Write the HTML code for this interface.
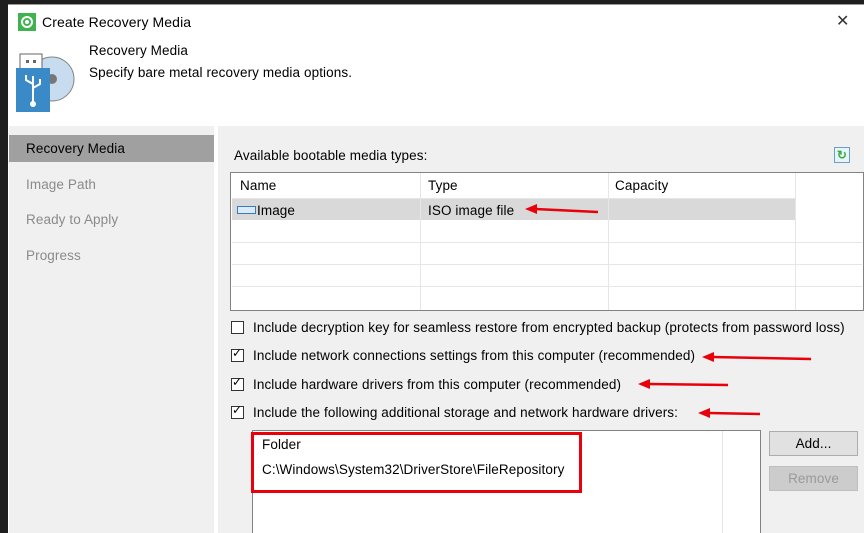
<!DOCTYPE html>
<html><head><style>
*{margin:0;padding:0;box-sizing:border-box}
html,body{width:864px;height:533px;overflow:hidden}
body{background:#1e1e1e;font-family:"Liberation Sans",sans-serif;font-size:13.5px;color:#000;position:relative;letter-spacing:0.1px}
.a{position:absolute;white-space:nowrap}
.cb{position:absolute;width:13px;height:13px;border:1px solid #333;background:#fff}
.row{position:absolute;left:232px;width:563px;height:1px;background:#e6e6e6}
.btn{position:absolute;width:89px;height:25px;border:1px solid #adadad;background:#e1e1e1;text-align:center;line-height:23px}
</style></head><body>
<div class="a" style="left:8px;top:4px;width:856px;height:529px;background:#fff;border-top:1px solid #999"></div>
<div class="a" style="left:9px;top:126px;width:855px;height:407px;background:#f0f0f0"></div>
<div class="a" style="left:214px;top:126px;width:4px;height:407px;background:#fff"></div>
<div class="a" style="left:18px;top:13px;width:18px;height:18px;background:#3fb34f"></div>
<div class="a" style="left:21px;top:16px;width:12px;height:12px;border:2.5px solid #fff;border-radius:50%"></div>
<div class="a" style="left:25px;top:20px;width:4px;height:4px;background:#fff;border-radius:50%"></div>
<div class="a" style="left:42px;top:14px;font-size:14px">Create Recovery Media</div>
<div class="a" style="left:836px;top:11px;font-size:16px;color:#333">✕</div>
<svg class="a" style="left:14px;top:50px" width="64" height="64" viewBox="0 0 64 64">
<circle cx="38" cy="29" r="22" fill="#c7dcef" stroke="#888" stroke-width="1"/>
<circle cx="38" cy="29" r="5" fill="#777"/>
<rect x="6" y="4" width="22" height="17" fill="#fff" stroke="#666"/>
<rect x="12" y="10" width="3" height="3" fill="#666"/><rect x="19" y="10" width="3" height="3" fill="#666"/>
<rect x="2" y="18" width="34" height="44" fill="#3a8ac8"/>
<path d="M19 26v26M19 34l-7-4v-5M19 38l7-4v-5" stroke="#fff" stroke-width="2" fill="none"/>
<circle cx="19" cy="54" r="3" fill="#fff"/>
</svg>
<div class="a" style="left:89px;top:43px">Recovery Media</div>
<div class="a" style="left:89px;top:65px">Specify bare metal recovery media options.</div>
<div class="a" style="left:9px;top:135px;width:205px;height:27px;background:#a0a0a0"></div>
<div class="a" style="left:26px;top:141px">Recovery Media</div>
<div class="a" style="left:26px;top:177px;color:#8a8a8a">Image Path</div>
<div class="a" style="left:26px;top:212px;color:#8a8a8a">Ready to Apply</div>
<div class="a" style="left:26px;top:248px;color:#8a8a8a">Progress</div>
<div class="a" style="left:234px;top:148px">Available bootable media types:</div>
<div class="a" style="left:834px;top:147px;width:16px;height:16px;border:1px solid #6a9fc9;background:#e8f4fb;color:#3bab3b;font-size:12px;line-height:14px;text-align:center;font-weight:bold">↻</div>
<div class="a" style="left:230px;top:172px;width:634px;height:139px;border:1px solid #828282;background:#fff"></div>
<div class="a" style="left:232px;top:199px;width:563px;height:21px;background:#d9d9d9"></div>
<div class="a" style="left:420px;top:173px;width:1px;height:137px;background:#e6e6e6"></div>
<div class="a" style="left:608px;top:173px;width:1px;height:137px;background:#e6e6e6"></div>
<div class="a" style="left:795px;top:173px;width:1px;height:137px;background:#e6e6e6"></div>
<div class="row" style="top:198px"></div><div class="row" style="top:242px;width:630px"></div><div class="row" style="top:264px;width:630px"></div><div class="row" style="top:286px;width:630px"></div>
<div class="a" style="left:240px;top:178px">Name</div>
<div class="a" style="left:428px;top:178px">Type</div>
<div class="a" style="left:615px;top:178px">Capacity</div>
<div class="a" style="left:237px;top:206px;width:19px;height:8px;border:1px solid #3a7bbf;background:#dbeaf7"></div>
<div class="a" style="left:257px;top:203px">Image</div>
<div class="a" style="left:428px;top:203px">ISO image file</div>
<div class="cb" style="left:231px;top:321px"></div>
<div class="a" style="left:253px;top:320px">Include decryption key for seamless restore from encrypted backup (protects from password loss)</div>
<div class="cb" style="left:231px;top:349px"></div><div class="a" style="left:232px;top:346px;font-size:12px">✓</div>
<div class="a" style="left:253px;top:348px">Include network connections settings from this computer (recommended)</div>
<div class="cb" style="left:231px;top:378px"></div><div class="a" style="left:232px;top:375px;font-size:12px">✓</div>
<div class="a" style="left:253px;top:377px">Include hardware drivers from this computer (recommended)</div>
<div class="cb" style="left:231px;top:406px"></div><div class="a" style="left:232px;top:403px;font-size:12px">✓</div>
<div class="a" style="left:253px;top:405px">Include the following additional storage and network hardware drivers:</div>
<div class="a" style="left:252px;top:430px;width:509px;height:110px;border:1px solid #828282;background:#fff"></div>
<div class="a" style="left:722px;top:431px;width:1px;height:102px;background:#e6e6e6"></div>
<div class="a" style="left:262px;top:437px">Folder</div>
<div class="a" style="left:262px;top:462px">C:\Windows\System32\DriverStore\FileRepository</div>
<div class="a" style="left:251px;top:432px;width:331px;height:61px;border:3px solid #e8000b"></div>
<div class="btn" style="left:769px;top:431px">Add...</div>
<div class="btn" style="left:769px;top:466px;color:#9a9a9a;background:#ccc;border-color:#bfbfbf">Remove</div>
<svg class="a" style="left:0;top:0" width="864" height="533">
<g stroke="#e8000b" stroke-width="2.5" fill="#e8000b">
<line x1="598" y1="212" x2="535" y2="209"/><polygon points="525,209 537,204 537,214" stroke="none"/>
<line x1="811" y1="359" x2="712" y2="357"/><polygon points="702,357 714,352 714,362" stroke="none"/>
<line x1="728" y1="385" x2="648" y2="384"/><polygon points="638,384 650,379 650,389" stroke="none"/>
<line x1="760" y1="414" x2="708" y2="413"/><polygon points="698,413 710,408 710,418" stroke="none"/>
</g></svg>
</body></html>
